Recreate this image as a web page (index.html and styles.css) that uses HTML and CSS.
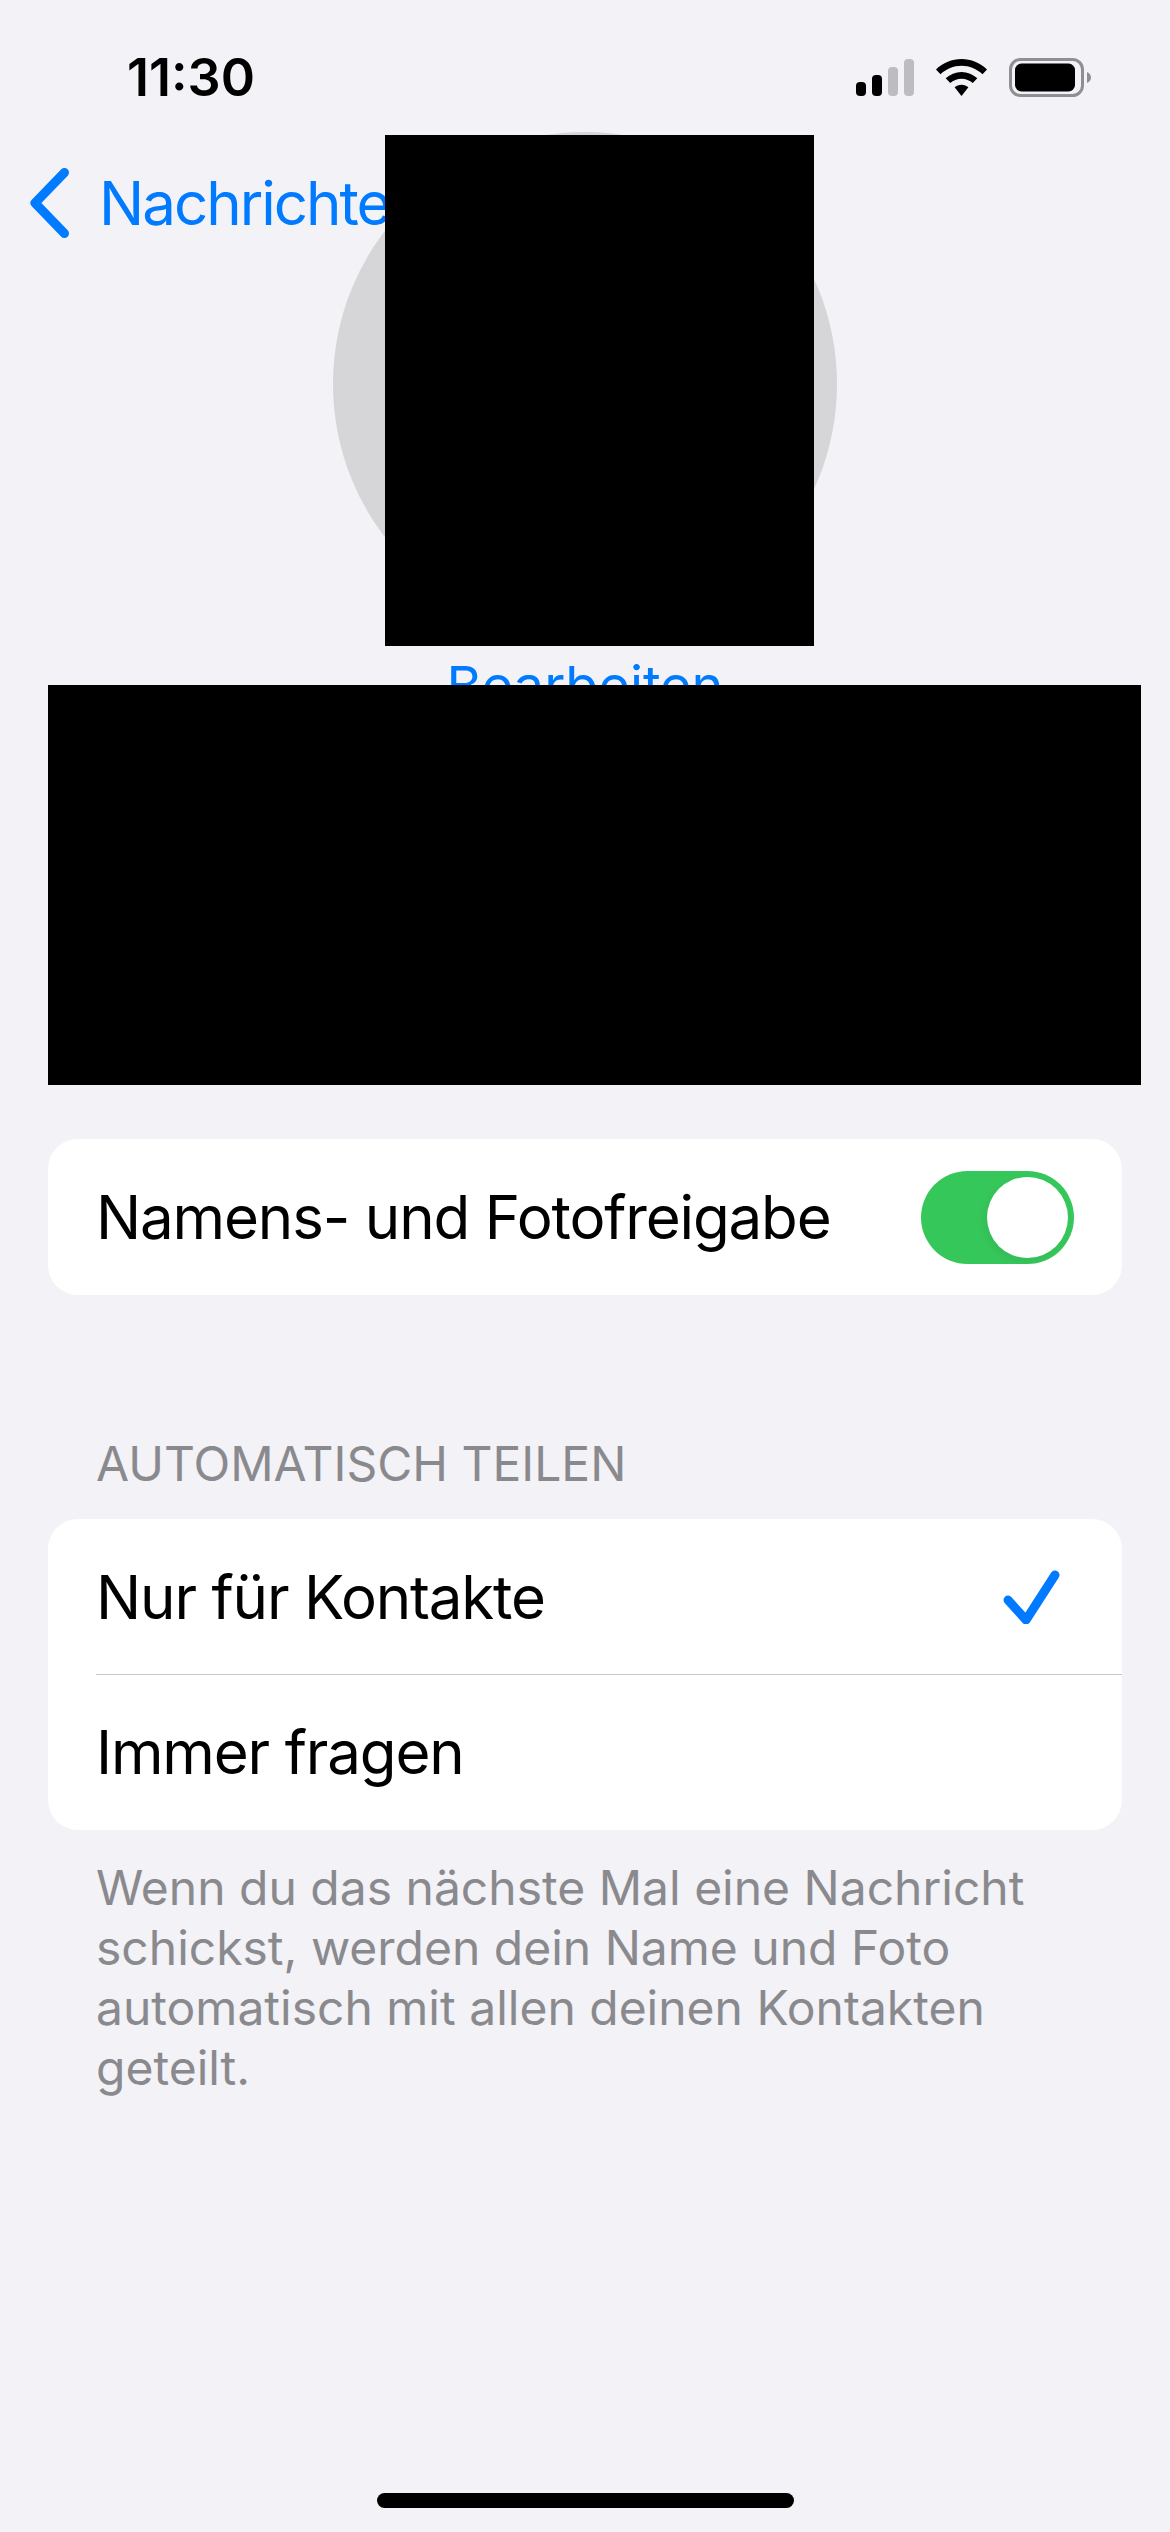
FILE: index.html
```html
<!DOCTYPE html>
<html lang="de">
<head>
<meta charset="utf-8">
<title>Namens- und Fotofreigabe</title>
<link rel="stylesheet" href="styles.css">
</head>
<body>
<div class="screen">
  <header class="status">
    <span class="time">11:30</span>
    <div class="status-icons">
      <svg class="signal" width="58" height="37" viewBox="0 0 58 37">
        <rect x="0" y="23" width="10" height="14" rx="4" fill="#000"/>
        <rect x="16" y="16" width="10" height="21" rx="4" fill="#000"/>
        <rect x="32" y="8" width="10" height="29" rx="4" fill="#bdbdc1"/>
        <rect x="48" y="0" width="10" height="37" rx="4" fill="#bdbdc1"/>
      </svg>
      <svg class="wifi" width="51" height="37" viewBox="0 0 51 37">
        <path d="M25.5 0C35 0 44 3.800 51 10.500L46.500 15.300C40.800 9.900 33.400 6.800 25.500 6.800C17.600 6.800 10.200 9.900 4.500 15.300L0 10.500C7 3.800 16 0 25.500 0Z" fill="#000"/>
        <path d="M25.500 13C31.500 13 37 15.300 41.300 19.300L36.800 24.100C33.700 21.300 29.800 19.700 25.500 19.700C21.200 19.700 17.300 21.300 14.200 24.100L9.700 19.300C14 15.300 19.500 13 25.500 13Z" fill="#000"/>
        <path d="M25.500 25.700C28.200 25.700 30.500 26.600 32.400 28.300L25.500 37L18.600 28.300C20.500 26.600 22.800 25.700 25.500 25.700Z" fill="#000"/>
      </svg>
      <svg class="battery" width="82" height="39" viewBox="0 0 82 39">
        <rect x="1.500" y="1.500" width="72" height="36" rx="10" fill="none" stroke="#8e8e93" stroke-width="3"/>
        <rect x="6" y="5.500" width="60" height="28" rx="6.500" fill="#000"/>
        <path d="M78 14C80.500 15 82 17 82 19.500C82 22 80.500 24 78 25Z" fill="#8e8e93"/>
      </svg>
    </div>
  </header>

  <nav class="nav">
    <svg class="chevron" width="39" height="70" viewBox="0 0 39 70">
      <path d="M34.500 4.500L5 35L34.500 65.500" fill="none" stroke="#007aff" stroke-width="9" stroke-linecap="round" stroke-linejoin="round"/>
    </svg>
    <span class="nav-label">Nachrichten</span>
  </nav>

  <section class="profile">
    <div class="avatar"></div>
    <a class="edit">Bearbeiten</a>
  </section>

  <section class="card">
    <div class="row">
      <span class="row-label">Namens- und Fotofreigabe</span>
      <span class="toggle"><span class="knob"></span></span>
    </div>
  </section>

  <h2 class="section-title">AUTOMATISCH TEILEN</h2>

  <section class="card">
    <div class="row row-divided">
      <span class="row-label">Nur für Kontakte</span>
      <svg class="check" width="57" height="55" viewBox="0 0 57 55">
        <path d="M5 31L23 51L52 6" fill="none" stroke="#007aff" stroke-width="9" stroke-linecap="round" stroke-linejoin="round"/>
      </svg>
    </div>
    <div class="row">
      <span class="row-label">Immer fragen</span>
    </div>
  </section>

  <p class="footnote">Wenn du das nächste Mal eine Nachricht schickst, werden dein Name und Foto automatisch mit allen deinen Kontakten geteilt.</p>

  <div class="home-bar"></div>

  <div class="redact redact-photo"></div>
  <div class="redact redact-name"></div>
</div>
</body>
</html>
```
FILE: styles.css
```css
* { box-sizing: border-box; }
html, body { margin: 0; padding: 0; }
body { background: #f2f2f7; }

.screen {
  position: relative;
  width: 1170px;
  height: 2532px;
  overflow: hidden;
  background: #f2f2f7;
  color: #000;
  font-family: Inter, "Noto Sans", "Liberation Sans", sans-serif;
}

.status {
  display: flex;
  justify-content: space-between;
  align-items: flex-start;
  height: 132px;
  padding: 58px 79px 0 127px;
}
.time {
  font-size: 52px;
  font-weight: 600;
  line-height: 40px;
}
.status-icons { display: flex; align-items: flex-start; }
.signal { margin-top: 1px; }
.wifi { margin: 1px 22px 0; }
.battery { display: block; }

.nav {
  position: absolute;
  left: 30px;
  top: 168px;
  display: flex;
  align-items: center;
  gap: 30px;
  color: #007aff;
}
.chevron { display: block; }
.nav-label {
  font-size: 60px;
  line-height: 70px;
  letter-spacing: -2px;
}

.profile {
  display: flex;
  flex-direction: column;
  align-items: center;
  height: 1007px;
}
.avatar {
  width: 504px;
  height: 504px;
  border-radius: 50%;
  background: #d6d6d8;
}
.edit {
  margin-top: 19px;
  font-size: 54px;
  line-height: 62px;
  color: #007aff;
}

.card {
  margin: 0 48px;
  background: #fff;
  border-radius: 30px;
  overflow: hidden;
}
.row {
  display: flex;
  justify-content: space-between;
  align-items: center;
  height: 156px;
  padding-left: 48px;
  padding-right: 48px;
}
.row-divided {
  position: relative;
  height: 155px;
  padding-right: 62px;
}
.row-divided::after {
  content: "";
  position: absolute;
  left: 48px;
  right: 0;
  bottom: -1px;
  height: 1px;
  background: #c6c6c8;
}
.row-label {
  font-size: 60px;
  line-height: 72px;
  letter-spacing: -1.15px;
}

.toggle {
  display: block;
  width: 153px;
  height: 93px;
  padding: 6px;
  border-radius: 47px;
  background: #36c75b;
}
.knob {
  display: block;
  width: 81px;
  height: 81px;
  margin-left: 60px;
  border-radius: 50%;
  background: #fff;
  box-shadow: -3px 3px 8px rgba(0, 0, 0, 0.06);
}

.section-title {
  margin: 0;
  padding: 142px 96px 28px;
  font-size: 48px;
  font-weight: 400;
  line-height: 54px;
  color: #8a8a8e;
}

.footnote {
  margin: 0;
  padding: 28px 96px 0;
  font-size: 48px;
  line-height: 60px;
  color: #8a8a8e;
}

.home-bar {
  position: absolute;
  left: 377px;
  top: 2493px;
  width: 417px;
  height: 15px;
  border-radius: 8px;
  background: #000;
}

.redact { position: absolute; background: #000; }
.redact-photo { left: 385px; top: 135px; width: 429px; height: 511px; }
.redact-name { left: 48px; top: 685px; width: 1093px; height: 400px; }
```
